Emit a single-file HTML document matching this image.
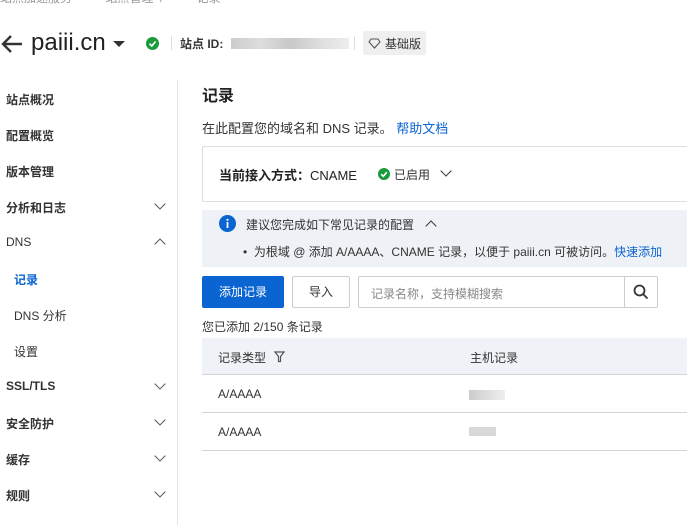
<!DOCTYPE html>
<html><head><meta charset="utf-8"><style>
*{margin:0;padding:0;box-sizing:border-box}
body{width:687px;height:525px;overflow:hidden;background:#fff;font-family:"Liberation Sans","Noto Sans CJK SC",sans-serif;color:#333;position:relative}
.a{position:absolute;white-space:nowrap}
.nav{font-size:12px;font-weight:bold;color:#333}
.chev{position:absolute;width:8px;height:8px;border-right:1.5px solid #555;border-bottom:1.5px solid #555}
</style></head><body>
<div class="a" style="left:0;top:-11px;font-size:12px;color:#999">站点加速服务 &nbsp; &nbsp; &nbsp; &nbsp; &nbsp;站点管理 &nbsp;/ &nbsp; &nbsp; &nbsp; &nbsp; &nbsp;记录</div>
<svg class="a" style="left:0;top:34px" width="24" height="20"><path d="M22 10H3M11 2L3 10L11 18" stroke="#333" stroke-width="2.4" fill="none"/></svg>
<div class="a" style="left:31px;top:29px;font-size:24px;color:#222">paiii.cn</div>
<svg class="a" style="left:112px;top:40px" width="14" height="8"><path d="M1 1H13L7 7Z" fill="#333"/></svg>
<svg class="a" style="left:146px;top:37px" width="13" height="13"><circle cx="6.5" cy="6.5" r="6.5" fill="#1a9a3a"/><path d="M3.5 6.7L5.8 9L9.6 4.5" stroke="#fff" stroke-width="1.7" fill="none"/></svg>
<div class="a" style="left:171px;top:36px;width:1px;height:14px;background:#ddd"></div>
<div class="a" style="left:180px;top:35px;font-size:12px;font-weight:bold;color:#333">站点 ID:</div>
<div class="a" style="left:231px;top:38px;width:118px;height:11px;background:linear-gradient(90deg,#ccc,#ddd,#c8c8c8,#ddd,#eee)"></div>
<div class="a" style="left:354px;top:36px;width:1px;height:14px;background:#ddd"></div>
<div class="a" style="left:363px;top:31px;width:63px;height:24px;background:#efefef;border-radius:2px"></div>
<svg class="a" style="left:368px;top:38px" width="13" height="11"><path d="M3 1H10L12 4L6.5 10L1 4Z" stroke="#555" stroke-width="1.1" fill="none"/></svg>
<div class="a" style="left:385px;top:35px;font-size:12px;color:#333">基础版</div>
<div class="a" style="left:177px;top:80px;width:1px;height:445px;background:#e3e3e3"></div>
<div class="a nav" style="left:6px;top:91px">站点概况</div>
<div class="a nav" style="left:6px;top:127px">配置概览</div>
<div class="a nav" style="left:6px;top:163px">版本管理</div>
<div class="a nav" style="left:6px;top:199px">分析和日志</div><div class="chev" style="left:156px;top:200px;transform:rotate(45deg)"></div>
<div class="a nav" style="left:6px;top:235px;font-weight:normal">DNS</div><div class="chev" style="left:156px;top:240px;transform:rotate(-135deg)"></div>
<div class="a nav" style="left:14px;top:271px;color:#0a64d2">记录</div>
<div class="a" style="left:14px;top:307px;font-size:12px;color:#333">DNS 分析</div>
<div class="a" style="left:14px;top:343px;font-size:12px;color:#333">设置</div>
<div class="a nav" style="left:6px;top:379px">SSL/TLS</div><div class="chev" style="left:156px;top:380px;transform:rotate(45deg)"></div>
<div class="a nav" style="left:6px;top:415px">安全防护</div><div class="chev" style="left:156px;top:416px;transform:rotate(45deg)"></div>
<div class="a nav" style="left:6px;top:451px">缓存</div><div class="chev" style="left:156px;top:452px;transform:rotate(45deg)"></div>
<div class="a nav" style="left:6px;top:487px">规则</div><div class="chev" style="left:156px;top:488px;transform:rotate(45deg)"></div>
<div class="a" style="left:202px;top:82px;font-size:16px;font-weight:bold;color:#222">记录</div>
<div class="a" style="left:202px;top:118px;font-size:13px;color:#333">在此配置您的域名和 DNS 记录。 <span style="color:#0a64d2">帮助文档</span></div>
<div class="a" style="left:202px;top:146px;width:500px;height:56px;border:1px solid #ddd;border-radius:2px"></div>
<div class="a" style="left:219px;top:165px;font-size:13px;color:#222"><b>当前接入方式：</b>CNAME</div>
<svg class="a" style="left:378px;top:168px" width="12" height="12"><circle cx="6" cy="6" r="6" fill="#1a9a3a"/><path d="M3.2 6.2L5.3 8.3L8.8 4.2" stroke="#fff" stroke-width="1.6" fill="none"/></svg>
<div class="a" style="left:394px;top:166px;font-size:12px;color:#333">已启用</div>
<div class="chev" style="left:442px;top:167px;transform:rotate(45deg);border-color:#333"></div>
<div class="a" style="left:202px;top:210px;width:485px;height:57px;background:#eef1f6"></div>
<svg class="a" style="left:219px;top:215px" width="17" height="17"><circle cx="8.5" cy="8.5" r="8.5" fill="#0a64d2"/><rect x="7.6" y="7" width="1.8" height="6" fill="#fff"/><circle cx="8.5" cy="4.8" r="1.1" fill="#fff"/></svg>
<div class="a" style="left:246px;top:216px;font-size:12px;color:#333">建议您完成如下常见记录的配置</div>
<div class="chev" style="left:427px;top:222px;transform:rotate(-135deg);border-color:#333"></div>
<div class="a" style="left:243px;top:243px;font-size:12px;color:#333">• &nbsp;为根域 @ 添加 A/AAAA、CNAME 记录，以便于 paiii.cn 可被访问。<span style="color:#0a64d2">快速添加</span></div>
<div class="a" style="left:202px;top:276px;width:82px;height:32px;background:#0a64d2;border-radius:2px;color:#fff;font-size:12px;text-align:center;line-height:32px">添加记录</div>
<div class="a" style="left:292px;top:276px;width:58px;height:32px;border:1px solid #ccc;border-radius:2px;font-size:12px;text-align:center;line-height:30px">导入</div>
<div class="a" style="left:358px;top:276px;width:300px;height:32px;border:1px solid #ccc;border-radius:2px"></div>
<div class="a" style="left:624px;top:277px;width:1px;height:30px;background:#ccc"></div>
<div class="a" style="left:371px;top:285px;font-size:12px;color:#888">记录名称，支持模糊搜索</div>
<svg class="a" style="left:633px;top:284px" width="16" height="16"><circle cx="6.5" cy="6.5" r="5" stroke="#333" stroke-width="1.8" fill="none"/><path d="M10 10L14.5 14.5" stroke="#333" stroke-width="1.8"/></svg>
<div class="a" style="left:202px;top:318px;font-size:12px;color:#333">您已添加 2/150 条记录</div>
<div class="a" style="left:202px;top:338px;width:485px;height:37px;background:#eff2f6;border-bottom:1px solid #d5d5d5"></div>
<div class="a" style="left:218px;top:349px;font-size:12px;color:#333">记录类型</div>
<svg class="a" style="left:274px;top:351px" width="11" height="12"><path d="M1 1H10L6.5 5.5V10.5H4.5V5.5Z" stroke="#555" stroke-width="1.2" fill="none"/></svg>
<div class="a" style="left:470px;top:349px;font-size:12px;color:#333">主机记录</div>
<div class="a" style="left:218px;top:387px;font-size:12px;color:#333">A/AAAA</div>
<div class="a" style="left:469px;top:390px;width:36px;height:10px;background:linear-gradient(90deg,#ccc,#ddd,#eee)"></div>
<div class="a" style="left:202px;top:412px;width:485px;height:1px;background:#d5d5d5"></div>
<div class="a" style="left:218px;top:425px;font-size:12px;color:#333">A/AAAA</div>
<div class="a" style="left:469px;top:427px;width:27px;height:9px;background:#d8d8d8"></div>
<div class="a" style="left:202px;top:450px;width:485px;height:1px;background:#d5d5d5"></div>
</body></html>
